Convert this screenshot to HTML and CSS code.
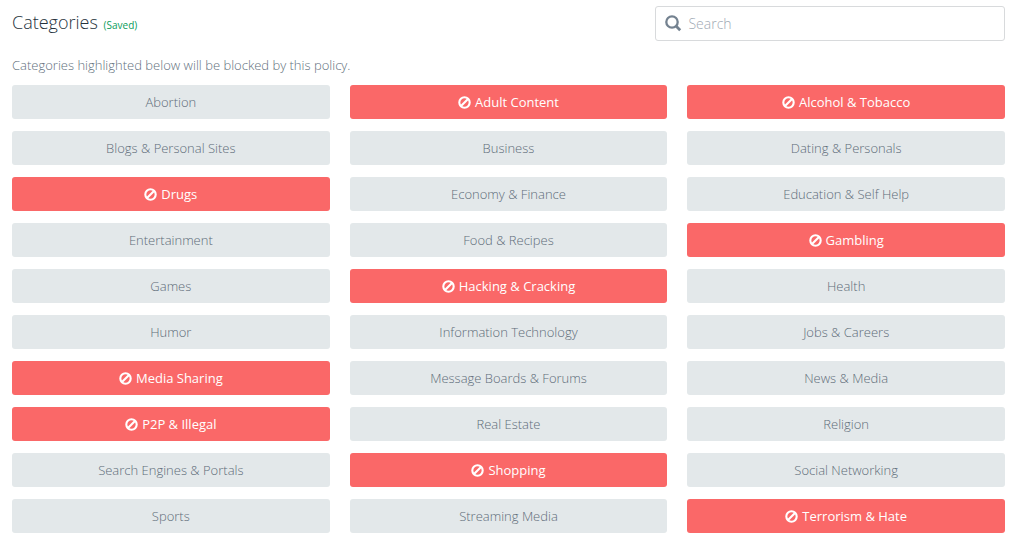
FILE: index.html
```html
<!DOCTYPE html>
<html lang="en">
  <head>
    <meta charset="utf-8" />
    <title>Categories</title>
    <link rel="stylesheet" href="styles.css">
  </head>
  <body>
    <svg class="sprite" aria-hidden="true">
      <symbol id="icon-ban" viewBox="0 0 13 13">
        <circle cx="6.5" cy="6.5" r="5.2" fill="none" stroke="currentColor" stroke-width="2.1" />
        <path d="M3 10 10 3" stroke="currentColor" stroke-width="2.1" />
      </symbol>
    </svg>
    <div class="container">
      <div class="header">
        <h2 class="title">Categories <small class="status">(Saved)</small></h2>
        <label class="search">
          <svg class="search-icon" viewBox="0 0 17 17" aria-hidden="true">
            <circle cx="7" cy="7" r="5.7" fill="none" stroke="currentColor" stroke-width="2.3" />
            <path d="M11 11l4.2 4.2" stroke="currentColor" stroke-width="2.8" />
          </svg>
          <input class="search-input" type="text" placeholder="Search" aria-label="Search" />
        </label>
      </div>
      <p class="help">Categories highlighted below will be blocked by this policy.</p>
      <div class="categories" id="categories"></div>
    </div>

    <script>
      const categories = [
        'Abortion', 'Adult Content', 'Alcohol & Tobacco',
        'Blogs & Personal Sites', 'Business', 'Dating & Personals',
        'Drugs', 'Economy & Finance', 'Education & Self Help',
        'Entertainment', 'Food & Recipes', 'Gambling',
        'Games', 'Hacking & Cracking', 'Health',
        'Humor', 'Information Technology', 'Jobs & Careers',
        'Media Sharing', 'Message Boards & Forums', 'News & Media',
        'P2P & Illegal', 'Real Estate', 'Religion',
        'Search Engines & Portals', 'Shopping', 'Social Networking',
        'Sports', 'Streaming Media', 'Terrorism & Hate',
      ];
      const blocked = new Set([
        'Adult Content', 'Alcohol & Tobacco', 'Drugs', 'Gambling',
        'Hacking & Cracking', 'Media Sharing', 'P2P & Illegal',
        'Shopping', 'Terrorism & Hate',
      ]);
      const banIcon =
        '<svg class="ban-icon" aria-hidden="true"><use href="#icon-ban"></use></svg>';
      const container = document.getElementById('categories');

      function setBlocked(button, name, isBlocked) {
        button.classList.toggle('blocked', isBlocked);
        button.setAttribute('aria-pressed', isBlocked);
        button.innerHTML = isBlocked ? banIcon : '';
        const label = document.createElement('span');
        label.textContent = name;
        button.appendChild(label);
      }

      categories.forEach((name) => {
        const button = document.createElement('button');
        button.type = 'button';
        button.className = 'category';
        setBlocked(button, name, blocked.has(name));
        button.addEventListener('click', () => {
          setBlocked(button, name, !button.classList.contains('blocked'));
        });
        container.appendChild(button);
      });
    </script>
  </body>
</html>
```

FILE: styles.css
```css
* {
  box-sizing: border-box;
}
body {
  margin: 0;
  background: #fff;
  color: #62707d;
  font-family: "Open Sans", "Noto Sans", sans-serif;
  font-size: 13px;
  font-weight: 300;
  line-height: 20px;
}
.sprite {
  display: none;
}
.container {
  padding: 6px 8px 10px 12px;
}
.header {
  display: flex;
  justify-content: space-between;
  align-items: center;
  margin-bottom: 14px;
}
.title {
  margin: 0;
  color: #26323c;
  font-size: 18px;
  font-weight: 300;
}
.status {
  margin-left: 1px;
  color: #0a9c5a;
  font-size: 10px;
  font-weight: 400;
}
.search {
  display: flex;
  align-items: center;
  gap: 6px;
  width: 35.2%;
  height: 35px;
  padding: 0 9px;
  border: 1px solid #d8dadc;
  border-radius: 3px;
}
.search-icon {
  flex: none;
  width: 17px;
  height: 17px;
  color: #748290;
}
.search-input {
  flex: 1;
  min-width: 0;
  padding: 0;
  border: 0;
  outline: 0;
  background: none;
  color: inherit;
  font: inherit;
  font-size: 14px;
}
.search-input::placeholder {
  color: #9faab4;
}
.help {
  margin: 0 0 10px;
}
.categories {
  display: grid;
  grid-template-columns: repeat(3, 1fr);
  gap: 12px 20px;
}
.category {
  display: flex;
  justify-content: center;
  align-items: center;
  gap: 4px;
  height: 34px;
  padding: 0 12px;
  border: 0;
  border-radius: 3px;
  background: #e3e8ea;
  color: #5e6c79;
  font: inherit;
  cursor: pointer;
}
.category.blocked {
  background: #fa6868;
  color: #fff;
  font-weight: 400;
}
.ban-icon {
  flex: none;
  width: 13px;
  height: 13px;
}
```
